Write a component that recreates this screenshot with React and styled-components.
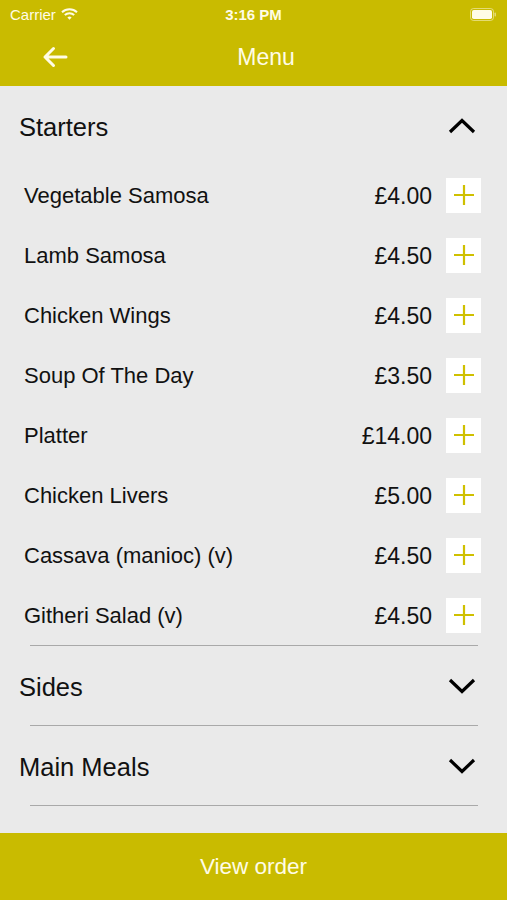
import React from "react";
import styled, { createGlobalStyle } from "styled-components";

const YELLOW = "#C9BB00";
const CREAM = "#FFFCE6";

const Global = createGlobalStyle`
  html, body { margin: 0; padding: 0; background: #EAEAEA; }
  body { font-family: "Liberation Sans", Arial, sans-serif; }
`;

const Page = styled.div`
  width: 507px;
  height: 900px;
  display: flex;
  flex-direction: column;
  background: #eaeaea;
  overflow: hidden;
`;

const Header = styled.header`
  background: ${YELLOW};
  display: flex;
  flex-direction: column;
`;

const StatusBar = styled.div`
  height: 28px;
  display: grid;
  grid-template-columns: 1fr auto 1fr;
  align-items: center;
  padding: 0 10px;
  color: ${CREAM};
  font-size: 15px;
`;

const StatusLeft = styled.div`
  display: flex;
  align-items: center;
  gap: 5px;
`;

const Time = styled.div`
  font-weight: 700;
  font-size: 15px;
`;

const StatusRight = styled.div`
  display: flex;
  justify-content: flex-end;
`;

const NavBar = styled.div`
  height: 58px;
  display: grid;
  grid-template-columns: 90px 1fr 65px;
  align-items: center;
`;

const BackButton = styled.div`
  display: flex;
  align-items: center;
  padding-left: 42px;
`;

const Title = styled.div`
  text-align: center;
  color: ${CREAM};
  font-size: 23px;
`;

const Content = styled.main`
  flex: 1;
  display: flex;
  flex-direction: column;
`;

const SectionHeader = styled.div`
  height: 79px;
  display: flex;
  align-items: center;
  justify-content: space-between;
  padding: 0 31px 0 19px;
  font-size: 25.5px;
  color: #111;
`;

const SectionTitle = styled.span`
  padding-top: 3px;
`;

const Divider = styled.div`
  height: 1px;
  margin: 0 29px 0 30px;
  background: #a9a9a9;
`;

const ItemRow = styled.div`
  height: 60px;
  display: flex;
  align-items: center;
  padding: 0 26px 0 24px;
  font-size: 22px;
  color: #111;
`;

const ItemName = styled.div`
  flex: 1;
  padding-top: 2px;
`;

const Price = styled.div`
  margin-right: 14px;
  padding-top: 2px;
  font-size: 23px;
`;

const AddButton = styled.div`
  width: 35px;
  height: 35px;
  background: #fff;
  display: flex;
  align-items: center;
  justify-content: center;
`;

const Footer = styled.div`
  height: 67px;
  background: ${YELLOW};
  display: flex;
  align-items: center;
  justify-content: center;
  color: ${CREAM};
  font-size: 22.5px;
`;

const Chevron = ({ up }) => (
  <svg width="28" height="18" viewBox="0 0 28 18">
    <path
      d={up ? "M2 15 L14 3.5 L26 15" : "M2 3 L14 14.5 L26 3"}
      fill="none"
      stroke="#000"
      strokeWidth="3.2"
    />
  </svg>
);

const Plus = () => (
  <svg width="20" height="20" viewBox="0 0 20 20">
    <path d="M0 10 H20 M10 0 V20" stroke="#CFC000" strokeWidth="2.2" />
  </svg>
);

const items = [
  ["Vegetable Samosa", "£4.00"],
  ["Lamb Samosa", "£4.50"],
  ["Chicken Wings", "£4.50"],
  ["Soup Of The Day", "£3.50"],
  ["Platter", "£14.00"],
  ["Chicken Livers", "£5.00"],
  ["Cassava (manioc) (v)", "£4.50"],
  ["Githeri Salad (v)", "£4.50"],
];

export default function App() {
  return (
    <Page>
      <Global />
      <Header>
        <StatusBar>
          <StatusLeft>
            <span>Carrier</span>
            <svg width="17" height="12" viewBox="0 0 17 12">
              <path d="M1 4.2 A11 11 0 0 1 16 4.2" fill="none" stroke={CREAM} strokeWidth="2" />
              <path d="M3.8 7 A7 7 0 0 1 13.2 7" fill="none" stroke={CREAM} strokeWidth="2" />
              <path d="M6.4 9.6 L8.5 11.8 L10.6 9.6 A3 3 0 0 0 6.4 9.6 Z" fill={CREAM} />
            </svg>
          </StatusLeft>
          <Time>3:16 PM</Time>
          <StatusRight>
            <svg width="27" height="13" viewBox="0 0 27 13">
              <rect x="0.5" y="0.5" width="23" height="12" rx="3" fill="none" stroke={CREAM} strokeOpacity="0.5" />
              <rect x="2" y="2" width="20" height="9" rx="1.8" fill={CREAM} />
              <rect x="24.5" y="4.5" width="1.5" height="4" rx="0.7" fill={CREAM} fillOpacity="0.5" />
            </svg>
          </StatusRight>
        </StatusBar>
        <NavBar>
          <BackButton>
            <svg width="26" height="22" viewBox="0 0 26 22">
              <path d="M24 11 H3 M11.5 2.5 L3 11 L11.5 19.5" fill="none" stroke={CREAM} strokeWidth="3" strokeLinecap="round" strokeLinejoin="round" />
            </svg>
          </BackButton>
          <Title>Menu</Title>
          <div />
        </NavBar>
      </Header>
      <Content>
        <SectionHeader>
          <SectionTitle>Starters</SectionTitle>
          <Chevron up />
        </SectionHeader>
        {items.map(([name, price]) => (
          <ItemRow key={name}>
            <ItemName>{name}</ItemName>
            <Price>{price}</Price>
            <AddButton>
              <Plus />
            </AddButton>
          </ItemRow>
        ))}
        <Divider />
        <SectionHeader>
          <SectionTitle>Sides</SectionTitle>
          <Chevron />
        </SectionHeader>
        <Divider />
        <SectionHeader>
          <SectionTitle>Main Meals</SectionTitle>
          <Chevron />
        </SectionHeader>
        <Divider />
      </Content>
      <Footer>View order</Footer>
    </Page>
  );
}
